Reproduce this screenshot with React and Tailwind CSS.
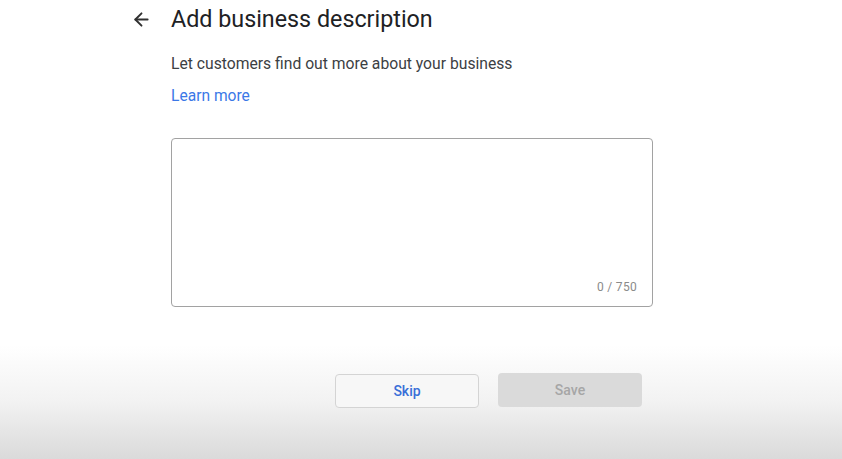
import { ArrowLeft } from "lucide-react";

export default function App() {
  return (
    <div
      className="w-full h-[459px] bg-white flex flex-col overflow-hidden"
      style={{ fontFamily: "Roboto, 'Liberation Sans', sans-serif" }}
    >
      <div className="pl-[131px] pt-[5px]">
        <div className="flex items-center">
          <ArrowLeft size={21} strokeWidth={2.2} className="text-[#303030] mt-[1px]" />
          <h1 className="ml-[19px] text-[23.3px] leading-7 text-[#202124]">
            Add business description
          </h1>
        </div>
      </div>

      <div className="pl-[171px]">
        <p className="mt-[21px] text-[15.7px] leading-5 text-[#3c4043]">
          Let customers find out more about your business
        </p>
        <a href="#" className="block mt-[12px] text-[15.6px] leading-5 text-[#3b78e7] w-fit">
          Learn more
        </a>
        <div className="mt-[32px] w-[482px] h-[169px] border border-[#a2a2a2] rounded-[4px] relative bg-white">
          <textarea className="w-full h-full resize-none outline-none bg-transparent p-3 text-sm" />
          <span className="absolute right-[15px] bottom-[11px] text-[12px] leading-4 text-[#8a8a8a] tracking-wide">
            0 / 750
          </span>
        </div>
      </div>

      <div className="mt-auto h-[114px] bg-gradient-to-b from-white via-[#f2f2f2] to-[#dadada] pl-[335px] pt-[29px] flex items-start gap-[19px]">
        <button className="w-[144px] h-[34px] rounded-[4px] border border-[#d4d4d4] bg-[#f7f7f7] text-[14px] font-medium text-[#3a6fd8]">
          Skip
        </button>
        <button className="w-[144px] h-[34px] -mt-[1px] rounded-[4px] bg-[#dadada] text-[14px] font-medium text-[#a6a6a6]">
          Save
        </button>
      </div>
    </div>
  );
}
